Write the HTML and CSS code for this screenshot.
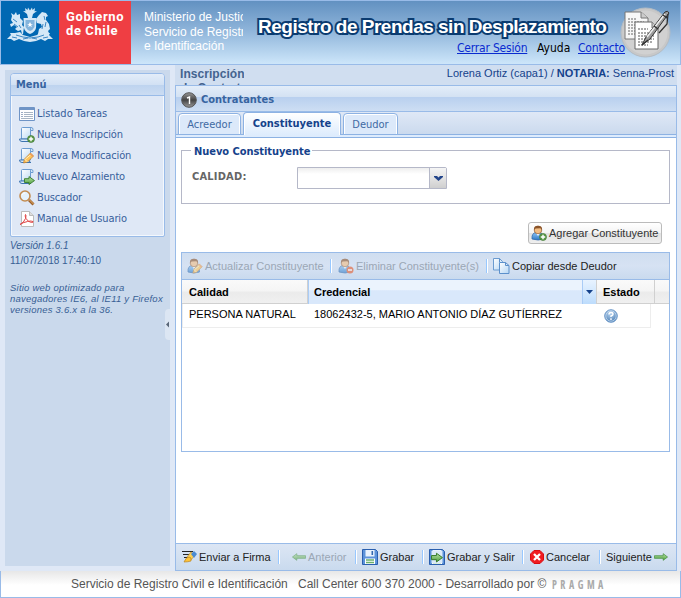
FILE: index.html
```html
<!DOCTYPE html>
<html lang="es">
<head>
<meta charset="utf-8">
<title>Registro de Prendas sin Desplazamiento</title>
<link rel="stylesheet" href="styles.css">
</head>
<body>
<svg class="defs" width="0" height="0">
  <defs>
    <linearGradient id="gPaper" x1="0" y1="0" x2="1" y2="1"><stop offset="0" stop-color="#fff"/><stop offset="1" stop-color="#b5d6f4"/></linearGradient>
    <linearGradient id="gGreen" x1="0" y1="0" x2="0" y2="1"><stop offset="0" stop-color="#b9e3a6"/><stop offset="1" stop-color="#4c9d3c"/></linearGradient>
    <linearGradient id="gBlue" x1="0" y1="0" x2="0" y2="1"><stop offset="0" stop-color="#8cc4f5"/><stop offset="1" stop-color="#2f79c6"/></linearGradient>
    <radialGradient id="gHelp" cx=".45" cy=".3" r=".8"><stop offset="0" stop-color="#b9d4ef"/><stop offset="1" stop-color="#3971ac"/></radialGradient>
    <linearGradient id="gDark" x1="0" y1="0" x2="0" y2="1"><stop offset="0" stop-color="#999"/><stop offset=".5" stop-color="#444"/><stop offset="1" stop-color="#999"/></linearGradient>
    <symbol id="scroll" viewBox="0 0 16 16"><path d="M2.500 1.500q0-1 1-1h9q1.500 0 1.500 2v1h-2.500v8.500h-9z" fill="url(#gPaper)" stroke="#6b9bd0"/><path d="M.5 12h9.500q0 2.500 2 2.500H3Q.5 14.500.5 12z" fill="#d9eafb" stroke="#3d74b0"/><path d="M11.500 3.500V2q0-1 1-1.500" fill="none" stroke="#6b9bd0"/></symbol>
    <symbol id="plus" viewBox="0 0 8 8"><circle cx="4" cy="4" r="3.500" fill="#5c9a49" stroke="#39742e" stroke-width=".6"/><path d="M4 1.800v4.400M1.800 4h4.400" stroke="#fff" stroke-width="1.400"/></symbol>
    <symbol id="pencil" viewBox="0 0 12 12"><path d="M1 11l1-4 6-6 3 3-6 6z" fill="#ffc45b" stroke="#c5832d" stroke-width=".8"/><path d="M2 7l3 3M3 7l6-5" stroke="#fff1bd" fill="none"/><path d="M8 1l3 3-1 1-3-3z" fill="#ec9a5b"/></symbol>
    <symbol id="arrow" viewBox="0 0 16 9"><path d="M.5 3h10V.700l5 3.800-5 3.800V6h-10z" fill="url(#gGreen)" stroke="#3f8d38" stroke-width=".8"/></symbol>
    <symbol id="fatArrow" viewBox="0 0 11 9"><path d="M.5 2.700h4.500V.6l5.500 4-5.500 4V6.500H.5z" fill="url(#gGreen)" stroke="#347a2a" stroke-width=".9"/></symbol>
    <symbol id="person" viewBox="0 0 16 16"><path d="M1 14q-.5-6 4-6.500h3q4.500.5 4.500 6.500-5 2-11.500 0z" fill="url(#gBlue)" stroke="#3169a9" stroke-width=".8"/><path d="M5 8l2 3 2-3" fill="#fff"/><circle cx="7" cy="5" r="3.800" fill="#f2bd83" stroke="#8a552c" stroke-width=".7"/><path d="M3 5Q2.500.7 7 .7T11 5L9.500 3.300 4.500 3.500z" fill="#8b5429"/></symbol>
    <symbol id="floppy" viewBox="0 0 16 16"><path d="M.5.5h13l2 2v13H.5z" fill="#5c93da" stroke="#2a5fae"/><path d="M3.500 1h9v6.500h-9z" fill="#e8f2fd"/><path d="M9.500 2h1.600v4H9.500z" fill="#3368ae"/><path d="M3 9.500h10V15H3z" fill="#fff"/><path d="M4 11h8M4 13.500h8" stroke="#6bb06b" stroke-width="1.300"/></symbol>
    <symbol id="pages" viewBox="0 0 17 16"><path d="M.5.5h6l3 3v8.500h-9z" fill="url(#gPaper)" stroke="#6b9bd0"/><path d="M6.500 4.500h6l3.500 3v8H6.500z" fill="url(#gPaper)" stroke="#5c90cb"/><path d="M12.500 4.500v3H16M6.500.5V4" fill="none" stroke="#5c90cb"/></symbol>
  </defs>
</svg>

<div class="app">
  <header class="top">
    <div class="logo-arms">
      <svg width="46" height="35" viewBox="0 0 46 35">
        <g fill="#d5e8f7">
          <path d="M16.500 11h13l-.5 10q-1 4-6 6-5-2-6-6z"/>
          <path d="M21 11l-1-4-4-3 2.500.3L18 1l2.500 2L21 .5l2 3 2-3 .5 2.500L28 1l-.5 3.300L30 4l-4 3-1 4z"/>
          <path d="M15 27l-1-4-3 1-3-2 2-2-3-2-3 2-1-3 3-1-2-3 1-4-1-3 3 2 2-3 1 3 3-1 0 4 3 3-1 4 2 2-1 7z"/>
          <path d="M31 27l1-5 3-2-1-3-4-1-1-4 3-4 3-3 4 1 2 3-2 1 0 3 3 4 1 5-2 2 1 2-4 1-2 2z"/>
          <path d="M0 32l4-4-1-2 5 0 5-1 3 3 7 2 7-2 3-3 5 1 5 0-1 2 4 4-5 0-3 2-4-2-5 2-6 1-6-1-5-2-5 2-3-2z"/>
        </g>
        <path d="M6 12l4 3M37 9l1 4M9 28l7 2 7 1 8-1 6-2M5 30l5 1M36 31l5-1M12 18l2 3M36 17l-1 5M7 17l4 3M39 15l-1 5M16 32l5-1M30 32l-5-1" stroke="#2d7dbd" stroke-width=".9" fill="none"/>
        <path d="M18.500 13h9v7q-1.500 3-4.500 4-3-1-4.500-4z" fill="#84b4dc"/><path d="M23 15l1 2h2l-2 1 1 2-2-1-2 1 1-2-2-1h2z" fill="#fff"/>
      </svg>
    </div>
    <div class="logo-gob"><span>Gobierno</span><br><span>de Chile</span></div>
    <div class="ministry">Ministerio de Justicia<br>Servicio de Registro Civil<br>e Identificación</div>
    <div class="title-area">
      <h1>Registro de Prendas sin Desplazamiento</h1>
      <nav><a class="n1">Cerrar Sesión</a><span class="n2">Ayuda</span><a class="n3">Contacto</a></nav>
    </div>
    <svg class="seal" width="51" height="51" viewBox="0 0 51 51">
      <circle cx="25.500" cy="25.500" r="24.500" fill="#c8c8c8" stroke="#b4bcc4"/><circle cx="25.500" cy="25.500" r="22" fill="#d1d1d1"/>
      <path d="M5 5h16l7 6v21H5z" fill="#f7f7f7" stroke="#777"/><path d="M21 5v6h7" fill="#ccc" stroke="#777"/>
      <path d="M8 12h9M8 15h16M8 18h16M8 21h16M8 24h16M8 27h16" stroke="#666" stroke-dasharray="2 1"/>
      <path d="M15 15h17l6 6v21H15z" fill="#fff" stroke="#666"/><path d="M32 15v6h6" fill="#ccc" stroke="#777"/>
      <path d="M18 22h10M18 26h16M18 29h16M18 32h16M18 35h14M18 38h10" stroke="#555" stroke-dasharray="2 1"/>
      <path d="M22 38l4-8L45 5q3-2 4 1L30 32z" fill="#9b9b9b" stroke="#303030"/><path d="M27 30L45 7" stroke="#eee" stroke-width="1.500"/><path d="M34 19l4 3M43 8l4 3M22 38l6-5M48 7l-1 10-8 9" stroke="#303030" stroke-width="1.300" fill="none"/>
    </svg>
  </header>

  <div class="middle">
    <aside>
      <section class="menu">
        <h2>Menú</h2>
        <ul>
          <li><svg width="16" height="16"><path d="M.5 1.500h15v13H.5z" fill="#fff" stroke="#6f94c6"/><path d="M1 2h14v2H1z" fill="#6f94c6"/><path d="M2.500 6.500h1M2.500 8.500h1M2.500 10.500h1" stroke="#3c5a8a"/><path d="M5 6.500h9M5 8.500h9M5 10.500h9M2 12.500h12" stroke="#a8b5c4"/></svg><span class="m0">Listado Tareas</span></li>
          <li><svg width="16" height="16"><use href="#scroll" width="16" height="16"/><use href="#plus" x="8" y="8" width="8" height="8"/></svg><span>Nueva Inscripción</span></li>
          <li><svg width="16" height="16"><use href="#scroll" width="16" height="16"/><use href="#pencil" x="3" y="4" width="13" height="12"/></svg><span>Nueva Modificación</span></li>
          <li><svg width="16" height="16"><use href="#scroll" width="16" height="16"/><use href="#fatArrow" x="5" y="7" width="11" height="9"/></svg><span>Nuevo Alzamiento</span></li>
          <li><svg width="16" height="16"><circle cx="6" cy="6" r="5" fill="#e5f2fc" stroke="#c38c51" stroke-width="1.600"/><path d="M3 5q1-2 3-2" stroke="#fff" fill="none"/><path d="M10 10l4.500 4.500" stroke="#9c602b" stroke-width="2.800"/><path d="M10.500 10l4 4" stroke="#e8b26c"/></svg><span>Buscador</span></li>
          <li><svg width="16" height="16"><path d="M2.500.5h8l4 4v11h-12z" fill="#fff" stroke="#bbb"/><path d="M10.500.5v4h4" fill="#ddd" stroke="#bbb"/><path d="M1 13.500q4-2 5.500-6 1-3.500 0-4-1 1 .5 4 2 3.500 5.500 4 2 0 1.500-1-2-1-5.500 0-5 1-7.500 3z" fill="none" stroke="#e04545"/></svg><span>Manual de Usuario</span></li>
        </ul>
      </section>
      <p class="version"><i>Versión 1.6.1</i></p>
      <p class="date">11/07/2018 17:40:10</p>
      <p class="notice">Sitio web optimizado para<br>navegadores IE6, al IE11 y Firefox<br>versiones 3.6.x a la 36.</p>
      <div class="collapse"><svg width="5" height="7"><path d="M4 .5v6L1 3.500z" fill="#596778"/></svg></div>
    </aside>

    <main>
      <div class="crumbs"><div class="crumb">Inscripción<br>de Contrato</div><div class="user">Lorena Ortiz (capa1) / <b>NOTARIA:</b> Senna-Prost</div></div>
      <div class="panel">
        <h2 class="panel-title"><svg width="16" height="16"><circle cx="8" cy="8" r="7.300" fill="url(#gDark)" stroke="#555"/><path d="M6 6L8.500 5v7" fill="none" stroke="#fff" stroke-width="1.400"/></svg>Contratantes</h2>
        <div class="tabs"><div class="tab t1"><span>Acreedor</span></div><div class="tab active"><span>Constituyente</span></div><div class="tab t3"><span>Deudor</span></div></div>
        <div class="content">
          <div class="fieldset"><div class="legend"><span>Nuevo Constituyente</span></div>
            <div class="field"><label>CALIDAD:</label><div class="combo"><div class="input"></div><div class="trigger"><svg width="9" height="7"><path d="M0 1h3l1.500 1.500L6 1h3v1L4.500 6 0 2z" fill="#23458a"/></svg></div></div></div>
          </div>
          <div class="add"><button><svg width="16" height="16"><use href="#person" width="16" height="16"/><use href="#plus" x="8" y="8" width="8" height="8"/></svg>Agregar Constituyente</button></div>
          <div class="grid">
            <div class="toolbar">
              <div class="act disabled a1"><svg width="16" height="16"><use href="#person" width="16" height="16"/><use href="#pencil" x="5" y="5" width="11" height="11"/></svg><span>Actualizar Constituyente</span></div>
              <div class="act disabled a2"><svg width="16" height="16"><use href="#person" width="16" height="16"/><circle cx="12" cy="12" r="3.500" fill="#e45c2d"/><path d="M10 12h4" stroke="#fff" stroke-width="1.500"/></svg><span>Eliminar Constituyente(s)</span></div>
              <div class="act a3"><svg width="17" height="16"><use href="#pages" width="17" height="16"/></svg><span>Copiar desde Deudor</span></div>
            </div>
            <div class="cols head"><div>Calidad</div><div class="sorted"><span>Credencial</span><div class="drop"><svg width="7" height="4"><path d="M0 0h7L3.500 4z" fill="#15428b"/></svg></div></div><div class="st">Estado</div><div></div></div>
            <div class="cols row"><div>PERSONA NATURAL</div><div class="cred">18062432-5, MARIO ANTONIO DÍAZ GUTÍERREZ</div><div class="state"><svg width="14" height="14"><circle cx="7" cy="7" r="6.300" fill="url(#gHelp)" stroke="#6f9aca"/><circle cx="7" cy="7" r="5.200" fill="none" stroke="#d3e4f5" stroke-width=".7"/><path d="M5 5.500Q5 3.500 7 3.500t2 1.700Q9 6.300 7 7v1M7 9.300V11" fill="none" stroke="#fff" stroke-width="1.400"/></svg></div></div>
          </div>
        </div>
        <div class="bottom">
          <div class="act b1"><svg width="15" height="16"><path d="M0 2.500h11M1 5.500h8M2 8.500h4" stroke="#252525"/><path d="M5 8l4-5 4 3-4 5z" fill="#ffd052" stroke="#b88425" stroke-width=".6"/><path d="M9 5l3-3 3 3-3 4z" fill="#4c8bd1"/><path d="M2 13q2-5 5-5t2 4q-3 1-7 1z" fill="#ffc337" stroke="#b88425" stroke-width=".7"/></svg><span>Enviar a Firma</span></div>
          <div class="act disabled b2"><svg width="14" height="8"><g transform="translate(14 0) scale(-1 1)"><use href="#arrow" width="14" height="8"/></g></svg><span>Anterior</span></div>
          <div class="act b3"><svg width="16" height="16"><use href="#floppy" width="16" height="16"/></svg><span>Grabar</span></div>
          <div class="act b4"><svg width="16" height="16"><use href="#floppy" width="16" height="16"/><path d="M2.500 2h11v12h-11z" fill="#dceaf9"/><use href="#fatArrow" x="2" y="3" width="12" height="11"/></svg><span>Grabar y Salir</span></div>
          <div class="act b5"><svg width="14" height="14"><path d="M4 .5h6L13.500 4v6L10 13.500H4L.5 10V4z" fill="#f01c20" stroke="#d80d13"/><path d="M4 4l6 6M10 4l-6 6" stroke="#fff" stroke-width="2.300"/></svg><span>Cancelar</span></div>
          <div class="act b6"><span>Siguiente</span><svg width="14" height="8"><use href="#arrow" width="14" height="8"/></svg></div>
        </div>
      </div>
    </main>
  </div>
  <footer><span class="f1">Servicio de Registro Civil e Identificación</span><span class="f2">Call Center 600 370 2000 - Desarrollado por ©</span><b>PRAGMA</b></footer>
</div>
</body>
</html>
```
FILE: styles.css
```css
* { box-sizing: border-box; }
body { margin: 0; width: 681px; height: 598px; overflow: hidden; background: #dfe8f6; font: 11px "Liberation Sans", Arial, sans-serif; color: #000; }
.defs { position: absolute; }
svg { flex: none; display: block; }
h1, h2, p, ul { margin: 0; padding: 0; }
.app { display: flex; flex-direction: column; height: 598px; }

.top { position: relative; flex: none; height: 65px; display: flex; border: 1px solid #99bbe8; background: linear-gradient(#6291c1, #8db3d9 45%, #cde6fa); }
.logo-arms { width: 58px; background: #0168b3; padding: 6px 0 0 6px; }
.logo-gob { width: 72px; background: #ef3e43; color: #fff; font: bold 13px/13.500px Roboto, sans-serif; padding: 9px 0 0 7px; letter-spacing: .6px; }
.ministry { width: 112px; height: 63px; padding: 9px 0 0 13px; overflow: hidden; white-space: nowrap; color: #fff; font-size: 12px; line-height: 14.500px; }
.title-area { padding: 14px 0 0 15px; }
h1 { font-size: 19px; line-height: 24px; letter-spacing: -.5px; white-space: nowrap; color: #fff; -webkit-text-stroke: 4px #0a3b70; paint-order: stroke fill; stroke-linejoin: round; }
nav { display: flex; padding: 2px 0 0 199px; font: 12px/15px "DejaVu Sans Condensed", "DejaVu Sans", sans-serif; white-space: nowrap; }
nav a { color: #0a2bd0; text-decoration: underline; }
.n1 { width: 80px; letter-spacing: -.2px; }
.n2 { width: 41px; }
.n3 { letter-spacing: -.2px; }
.seal { position: absolute; left: 619px; top: 6px; }

.middle { flex: 1; display: flex; min-height: 0; }
aside { position: relative; width: 165px; margin: 5px 5px 5px 5px; background: #cad9ec; padding: 3px 5px 0; color: #385f95; }
.menu { width: 155px; height: 164px; border: 1px solid #99bbe8; border-radius: 4px 4px 2px 2px; background: #dfe8f6; box-shadow: inset 0 0 0 1px #f4f8fd; }
.menu h2 { height: 22px; border-bottom: 1px solid #99bbe8; border-radius: 3px 3px 0 0; padding-left: 5px; font: bold 11px/22px "DejaVu Sans Condensed", "DejaVu Sans", sans-serif; color: #3764a0; background: linear-gradient(#e3edf9, #d2e1f4 50%, #bdd3ef 51%, #cbdcf2); }
.menu ul { list-style: none; padding: 7px 0 0 8px; }
.menu li { height: 21px; display: flex; align-items: center; gap: 2px; font: 11px/21px "DejaVu Sans Condensed", "DejaVu Sans", sans-serif; letter-spacing: -.14px; color: #385f9c; white-space: nowrap; }
.m0 { letter-spacing: 0; }
.version { font-size: 10px; line-height: 12px; margin-top: 3px; letter-spacing: 0; }
.date { font-size: 10px; line-height: 12px; margin-top: 3px; }
.notice { font-size: 9.500px; line-height: 11px; margin-top: 15px; font-style: italic; letter-spacing: .23px; white-space: nowrap; }
.collapse { position: absolute; right: 0; top: 239px; width: 5px; height: 31px; background: #dce6f3; border-radius: 4px 0 0 4px; display: grid; place-items: center; }

main { width: 502px; }
.crumbs { height: 20px; display: flex; justify-content: space-between; background: #d0def0; overflow: hidden; }
.crumb { width: 69px; padding: 2px 0 0 5px; font: bold 12px/14px "Liberation Sans", Arial, sans-serif; letter-spacing: .05px; color: #44648f; white-space: nowrap; overflow: hidden; }
.user { line-height: 16px; color: #15428b; padding-right: 3px; white-space: nowrap; }
.panel { height: 486px; border: 1px solid #99bbe8; border-bottom: 0; background: #fff; display: flex; flex-direction: column; }
.panel-title { flex: none; height: 26px; display: flex; align-items: center; gap: 4px; padding: 3px 0 0 5px; font: bold 11px/22px "DejaVu Sans Condensed", "DejaVu Sans", sans-serif; color: #3764a0; border-bottom: 1px solid #99bbe8; background: linear-gradient(#e3edf9, #d4e2f3 42%, #b9d0ef 46%, #cddef3); }
.tabs { flex: none; height: 26px; display: flex; align-items: flex-end; gap: 2px; padding: 0 2px 3px; background: linear-gradient(#dfe8f6, #cbdaee 22px, #8db2e3 22px, #8db2e3 23px, #deecfd 23px, #deecfd 25px, #8db2e3 25px); }
.tab { height: 22px; border: 1px solid #8db2e3; border-radius: 4px 4px 0 0; box-shadow: inset 1px 1px #fff, inset -1px 0 #fff; background: #dce9fa; font: 11px/21px "DejaVu Sans Condensed", "DejaVu Sans", sans-serif; color: #416aa3; display: flex; justify-content: center; white-space: nowrap; }
.t1 { width: 63px; }
.t3 { width: 55px; }
.active { width: 98px; height: 23px; border-bottom: 0; background: linear-gradient(#fff, #deecfd); color: #15428b; font-weight: bold; line-height: 22px; }
.content { flex: 1; padding: 12px 5px 0; }
.fieldset { height: 54px; border: 1px solid #b5b8c8; width: 489px; }
.legend { height: 13px; margin: -6px 0 0 9px; font: bold 11px/14px "DejaVu Sans Condensed", "DejaVu Sans", sans-serif; letter-spacing: -.05px; color: #15428b; }
.legend span { display: inline-block; width: 121px; padding-left: 3px; background: #fff; white-space: nowrap; }
.field { display: flex; padding: 9px 0 0 10px; }
label { width: 105px; font: bold 11px/20px "DejaVu Sans Condensed", "DejaVu Sans", sans-serif; letter-spacing: .2px; color: #666; }
.combo { width: 150px; height: 22px; display: flex; border: 1px solid #b5b8c8; border-radius: 0 2px 0 0; background: linear-gradient(#eee, #fff 6px); }
.input { flex: 1; }
.trigger { width: 17px; border-left: 1px solid #b5b8c8; background: linear-gradient(#f5f5f5, #e5e5e5 45%, #cfcfcf); display: grid; place-items: center; }
.add { display: flex; justify-content: flex-end; padding: 18px 9px 0 0; }
button { width: 134px; height: 22px; padding: 0 0 0 2px; display: flex; align-items: center; gap: 2px; border: 1px solid #bbb; border-radius: 3px; background: linear-gradient(#fff, #f4f4f4 50%, #e2e2e2 52%, #efefef); font: 11px "Liberation Sans", Arial, sans-serif; color: #333; white-space: nowrap; }
.grid { width: 489px; height: 200px; margin-top: 8px; border: 1px solid #99bbe8; background: #fff; }
.toolbar { height: 27px; display: flex; align-items: center; padding-left: 5px; border-bottom: 1px solid #99bbe8; background: linear-gradient(#d0def0, #d6e2f3 50%, #c9daee); }
.act { position: relative; display: flex; align-items: center; gap: 2px; white-space: nowrap; color: #222; }
.act + .act::before { content: ""; width: 1px; height: 14px; background: #98c8ff; border-right: 1px solid #fff; box-sizing: content-box; margin-right: 3px; }
.disabled svg { opacity: .6; }
.disabled span { color: #9ba7b5; }
.a1 { width: 143px; }
.a2 { width: 156px; }
.act.a2::before { margin-right: 4px; }
.cols { display: grid; grid-template-columns: 126px 289px 58px 1fr; }
.head { height: 24px; font-weight: bold; line-height: 24px; background: linear-gradient(#fafafa, #f5f5f5 45%, #ebebeb 55%, #f0f0f0); border-bottom: 1px solid #d0d0d0; }
.head > div { padding-left: 7px; border-right: 1px solid #d0d0d0; }
.head > div:last-child { border: 0; }
.head .st { padding-left: 6px; }
.head .sorted { border-left: 1px solid #aaccf6; padding-left: 5px; display: flex; justify-content: space-between; background: linear-gradient(#ebf3fd, #ebf3fd 40%, #d9e8fb 45%); }
.drop { width: 14px; border-left: 1px solid #aaccf6; background: linear-gradient(#e8f3ff, #bddcfc); display: grid; place-items: center; }
.row { width: 469px; height: 24px; grid-template-columns: 126px 289px 54px; line-height: 21px; border: 1px solid #ededed; border-top: 0; }
.row > div { padding-left: 6px; white-space: nowrap; }
.row .cred { padding-left: 5px; }
.row .state { padding: 5px 0 0 6px; }
.bottom { flex: none; height: 28px; display: flex; align-items: center; padding: 0 0 0 6px; border-top: 1px solid #99bbe8; border-bottom: 1px solid #99bbe8; background: linear-gradient(#dce6f4, #d3e0f1 50%, #c9daee); }
.b1 { width: 96px; }
.b2 { width: 77px; }
.act.b2::before { margin-right: 10px; }
.b3 { width: 67px; }
.b4 { width: 100px; }
.b5 { width: 77px; }
.act.b5::before { margin-right: 4px; }
footer { flex: none; height: 27px; border: 1px solid #99bbe8; border-top: 0; display: flex; align-items: center; padding-left: 70px; background: linear-gradient(#e7e7e7, #fff 14px); color: #555; font-size: 12px; white-space: nowrap; }
.f1 { width: 227px; }
.f2 { width: 254px; }
footer b { font: bold 12px "Open Sans", sans-serif; letter-spacing: 4.200px; color: #aaa; font-stretch: condensed; transform: scaleX(.83); transform-origin: left; }
```
